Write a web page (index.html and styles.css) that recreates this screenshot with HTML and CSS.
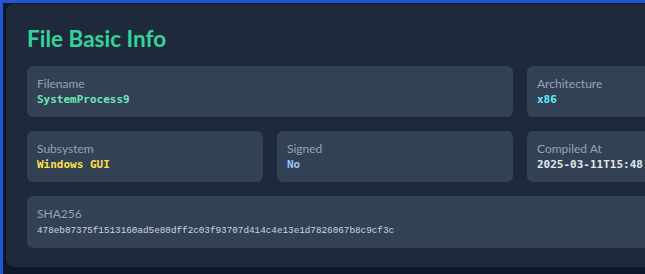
FILE: index.html
```html
<!DOCTYPE html>
<html lang="en">
<head>
<meta charset="utf-8">
<title>File Basic Info</title>
<link rel="stylesheet" href="styles.css">
</head>
<body>
<div class="frame">
  <section class="card">
    <h2 class="title">File Basic Info</h2>
    <div class="grid">
      <div class="item span2">
        <div class="label">Filename</div>
        <div class="value v-green">SystemProcess9</div>
      </div>
      <div class="item">
        <div class="label">Architecture</div>
        <div class="value v-cyan">x86</div>
      </div>
      <div class="item row2">
        <div class="label">Subsystem</div>
        <div class="value v-yellow">Windows GUI</div>
      </div>
      <div class="item">
        <div class="label">Signed</div>
        <div class="value v-blue">No</div>
      </div>
      <div class="item">
        <div class="label">Compiled At</div>
        <div class="value v-white">2025-03-11T15:48:22Z</div>
      </div>
      <div class="item full">
        <div class="label">SHA256</div>
        <div class="value hash">478eb07375f1513160ad5e80dff2c03f93707d414c4e13e1d7826067b8c9cf3c</div>
      </div>
    </div>
  </section>
</div>
</body>
</html>
```
FILE: styles.css
```css
html, body {
  margin: 0;
  padding: 0;
  overflow: hidden;
  background: #0f172a;
  height: 100%;
}

.frame {
  border-top: 3px solid #2456d3;
  border-left: 3px solid #2456d3;
  padding: 1px 0 0 3px;
  box-sizing: border-box;
  height: 100%;
}

.card {
  background: #1e293b;
  border-radius: 8px;
  width: 1100px;
  height: 263px;
  box-sizing: border-box;
  padding: 22px 21px 0 21px;
  font-family: Lato, "Noto Sans", sans-serif;
}

.title {
  margin: 0 0 14px 0;
  font-size: 22.5px;
  line-height: 26px;
  font-weight: 700;
  color: #34d399;
}

.grid {
  display: grid;
  grid-template-columns: repeat(4, 236px);
  gap: 14px;
}

.item {
  background: #334155;
  border-radius: 6px;
  padding: 10px 10px;
  height: 51px;
  box-sizing: border-box;
}

.span2 { grid-column: span 2; }
.row2 { grid-column: 1; }
.full { grid-column: 1 / -1; height: 52px; }

.label {
  font-size: 12px;
  line-height: 15px;
  color: #94a3b8;
}

.value {
  font-family: "DejaVu Sans Mono", "Liberation Mono", monospace;
  font-size: 11px;
  line-height: 16px;
  font-weight: 700;
  margin-top: 1px;
  white-space: nowrap;
}

.v-green { color: #6ee7b7; }
.v-cyan { color: #67e8f9; }
.v-yellow { color: #fde047; }
.v-blue { color: #93c5fd; }
.v-white { color: #e2e8f0; }

.hash {
  font-family: "Liberation Mono", monospace;
  font-size: 9.3px;
  font-weight: 400;
  color: #cbd5e1;
  margin-top: 2px;
}
```
